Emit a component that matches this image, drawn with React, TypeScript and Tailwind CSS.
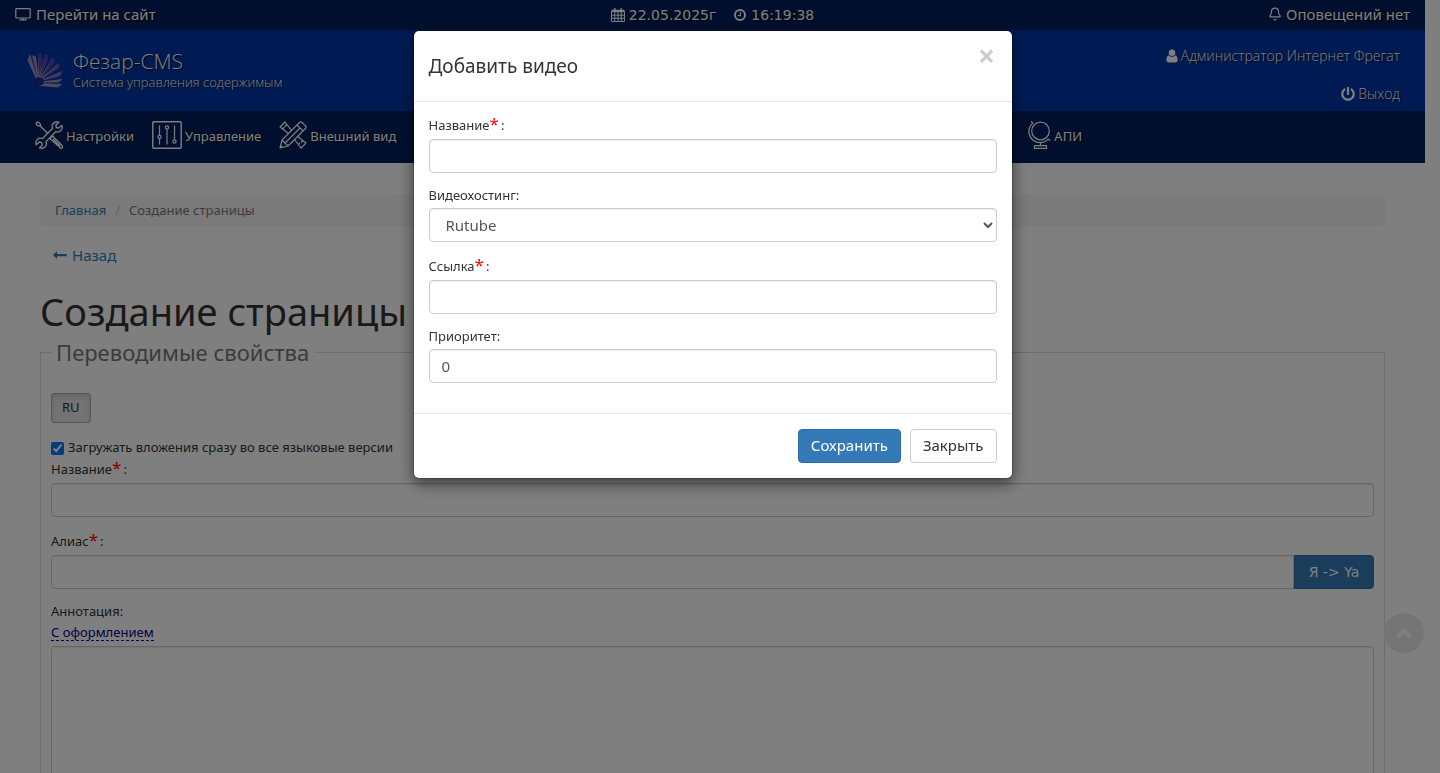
import { useState } from 'react';
import type { ReactNode } from 'react';
import { Bell } from 'lucide-react';
import { FaPowerOff } from 'react-icons/fa';

const inputClass =
  'block w-full h-[34px] px-3 text-[15px] text-[#555] bg-white border border-[#ccc] rounded shadow-[inset_0_1px_1px_rgba(0,0,0,0.075)] outline-none';

function MonitorIcon() {
  return (
    <svg className="w-4 h-3.5" viewBox="0 0 16 14" fill="none" stroke="currentColor" strokeWidth="1.2">
      <rect x="0.8" y="1.6" width="14.4" height="9.4" rx="0.8" />
      <path d="M8 11v1.6M4.5 12.9h7" />
    </svg>
  );
}

function CalendarIcon() {
  return (
    <svg className="w-3.5 h-3.5" viewBox="0 0 14 14" fill="none" stroke="currentColor">
      <path d="M0.5 3.5h13v10H0.5zM3.7 4v9.5M7 4v9.5M10.3 4v9.5M1 7.2h12M1 10.3h12" strokeWidth="1" />
      <path d="M0.5 3h13" strokeWidth="2.4" />
      <path d="M3.8 0.2v3M10.2 0.2v3" strokeWidth="1.8" />
    </svg>
  );
}

function ClockIcon() {
  return (
    <svg className="w-3 h-3" viewBox="0 0 12 12" fill="none" stroke="currentColor">
      <circle cx="6" cy="6" r="5" strokeWidth="1.9" />
      <path d="M6.4 3v3.6H3.8" strokeWidth="1.1" />
    </svg>
  );
}

function UserIcon() {
  return (
    <svg className="w-3 h-3.5" viewBox="0 0 12 14" fill="currentColor">
      <circle cx="6" cy="3.8" r="3.3" />
      <path d="M2.6 6.2C1 6.6 0.4 8.6 0.4 11c0 1.5 0.8 2.4 2 2.4h7.2c1.2 0 2-0.9 2-2.4 0-2.4-0.6-4.4-2.2-4.8C8.5 7.2 7.4 7.8 6 7.8S3.5 7.2 2.6 6.2z" />
    </svg>
  );
}

function LongArrowIcon() {
  return (
    <svg className="w-3.5 h-2.5" viewBox="0 0 14 10" fill="currentColor">
      <path d="M0 5l4-3.8v2.8h9.8v2.2H4v2.8z" />
    </svg>
  );
}

function FanLogo() {
  return (
    <svg className="w-9 h-9" viewBox="0 0 36 36">
      <g fill="#9a94c0">
        <path d="M9 27L0.5 8L3 2L10 25z" />
        <path d="M10 26L5 3L9 5L11.5 25z" />
        <path d="M11 25L11 2L15 6L12.5 25z" />
        <path d="M12 25L18 3L20.5 8L13 25.5z" />
        <path d="M12.5 26L25.5 6L27 11L13.5 26.5z" />
        <path d="M13 27L31.5 11L31.5 16L14 27.5z" />
        <path d="M14 28L35 19L33 24L14 29z" />
        <path d="M14 29.5L35.5 27L32 30.5L14 30.5z" />
        <path d="M10 31L35.5 32L31 35.5L14 34z" />
      </g>
      <g fill="#5b3fa8">
        <path d="M11 25L5 3L3 2L10 25z" opacity="0.5" />
        <path d="M12 25L11 2L13.5 0.5L15 6z" />
        <path d="M13 25L18 3L21 2.5L20.5 8z" />
        <path d="M14 26L25.5 6L28 6.5L27 11z" />
        <path d="M14 28L31.5 11L33.5 13L31.5 16z" opacity="0.7" />
        <path d="M14 29L35 19L36 22L33 24z" opacity="0.4" />
      </g>
      <path d="M7 31a5 5 0 0 1 10-1l-1.5 3h-7z" fill="#152a80" />
      <circle cx="12" cy="30.5" r="1.6" fill="#34348c" />
    </svg>
  );
}

function ToolsIcon() {
  return (
    <svg className="w-7 h-7" viewBox="0 0 28 28" fill="none" stroke="currentColor" strokeWidth="1.3" strokeLinejoin="round">
      <path d="M1 2.5L2.5 1L5 2.5L5.5 4.5L4 5.2L2 4.5zM5 4.8L12.5 12.3" />
      <path d="M15 17.5l2.5-2.5 9.5 9.5c0.8 0.8 0.8 1.6 0.2 2.2s-1.6 0.6-2.2-0.2zM18 18l7 7" />
      <path d="M24 1.2c-2-0.8-4.5-0.2-5.8 1.3-1.2 1.4-1.3 3.3-0.7 5L7.5 17.5c-1.7-0.6-3.6-0.4-5 0.8C1 19.7 0.5 22 1.2 23.8l3-2.8 2.5 0.6 0.6 2.5-2.8 2.9c2 0.7 4.3 0.2 5.7-1.2 1.3-1.4 1.5-3.4 0.8-5.2L20.7 10.7c1.7 0.6 3.6 0.4 5-0.9 1.4-1.4 1.9-3.7 1.1-5.6l-2.9 2.9-2.5-0.6-0.6-2.5z" />
    </svg>
  );
}

function SlidersIcon() {
  return (
    <svg className="w-[30px] h-7" viewBox="0 0 30 28" fill="none" stroke="currentColor" strokeWidth="1.2">
      <rect x="0.8" y="0.7" width="28.4" height="26.6" rx="1" strokeWidth="1.4" />
      <path d="M7.5 4.5v9.5M7.5 18v5.5M15 8.5v15M22.5 4.5v14" />
      <circle cx="7.5" cy="16" r="1.6" />
      <circle cx="15" cy="6.5" r="1.6" />
      <circle cx="22.5" cy="20.5" r="1.6" />
    </svg>
  );
}

function DesignIcon() {
  return (
    <svg className="w-7 h-7" viewBox="0 0 28 28" fill="none" stroke="currentColor" strokeWidth="1.2" strokeLinejoin="round">
      <path d="M9.5 12.5L1 6L6 1L12.5 9.5M18.5 15.5L27 22L22 27L15.5 18.5" />
      <path d="M3.5 8l2-2M8 3.5l-2 2M24 19.5l-2 2M19.5 23.5l1.5-1.5" />
      <path d="M1 27l2-8L20.5 1.5c0.8-0.8 1.8-0.8 2.6 0l3.4 3.4c0.8 0.8 0.8 1.8 0 2.6L9 25zM3 19l6 6M18 4l6 6M6 22L21 7M1.5 24.5l2 2" />
    </svg>
  );
}

function GlobeIcon() {
  return (
    <svg className="w-[23px] h-7" viewBox="0 0 23 28" fill="none" stroke="currentColor" strokeWidth="1.2">
      <circle cx="12.5" cy="10" r="8.8" />
      <path d="M3 0.5l1.8 1.6C1.5 5 0.3 9 1.2 13c1.3 5.5 5.8 8.7 10.8 8.7 3.2 0 6-1.2 8.2-3.5l2 1.3M12.5 21.7v3M6.5 24.7h12v2.7h-12z" />
    </svg>
  );
}

function NavItem({ icon, children }: { icon: ReactNode; children: ReactNode }) {
  return (
    <a href="#" className="flex items-center gap-[3px]">
      {icon}
      <span className="pt-[3px]">{children}</span>
    </a>
  );
}

interface FieldLabelProps {
  htmlFor: string;
  required?: boolean;
  children: ReactNode;
}

function FieldLabel({ htmlFor, required, children }: FieldLabelProps) {
  return (
    <label htmlFor={htmlFor} className={`block text-[13px] leading-[14px] ${required ? 'h-[23px] pt-px' : 'h-5'}`}>
      {children}
      {required && <span className="mr-0.5 text-[17px] leading-[14px] text-[red]">*</span>}:
    </label>
  );
}

function VideoModal({ onClose }: { onClose: () => void }) {
  return (
    <div className="fixed inset-0 pr-[15px] overflow-hidden">
      <div
        role="dialog"
        aria-labelledby="modal-title"
        className="w-full max-w-[600px] mt-[30px] mx-auto bg-white bg-clip-padding border border-black/20 rounded-md shadow-[0_5px_15px_rgba(0,0,0,0.5)]"
      >
        <div className="flex items-start justify-between h-[71px] px-[15px] pt-[15px] border-b border-[#e5e5e5]">
          <h4 id="modal-title" className="text-[19px] leading-10">Добавить видео</h4>
          <button onClick={onClose} aria-label="Закрыть" className="w-5 h-5 text-3xl leading-5 font-bold text-[#ccc]">
            ×
          </button>
        </div>

        <div className="px-[15px] pt-3.5 pb-[30px] space-y-[15px]">
          <div>
            <FieldLabel htmlFor="video-name" required>Название</FieldLabel>
            <input id="video-name" type="text" className={inputClass} />
          </div>
          <div>
            <FieldLabel htmlFor="video-host">Видеохостинг</FieldLabel>
            <select id="video-host" className={inputClass}>
              <option>Rutube</option>
            </select>
          </div>
          <div>
            <FieldLabel htmlFor="video-link" required>Ссылка</FieldLabel>
            <input id="video-link" type="text" className={inputClass} />
          </div>
          <div>
            <FieldLabel htmlFor="video-priority">Приоритет</FieldLabel>
            <input id="video-priority" type="text" defaultValue="0" className={inputClass} />
          </div>
        </div>

        <div className="flex justify-end gap-[9px] p-[15px] border-t border-[#e5e5e5] text-[15px]">
          <button className="h-[34px] px-3 pb-0.5 text-white bg-[#337ab7] border border-[#2e6da4] rounded">Сохранить</button>
          <button onClick={onClose} className="h-[34px] px-3 pb-0.5 bg-white border border-[#ccc] rounded">
            Закрыть
          </button>
        </div>
      </div>
    </div>
  );
}

export default function App() {
  const [modalOpen, setModalOpen] = useState(true);

  return (
    <div className="h-screen overflow-hidden bg-white pr-[15px] font-['Noto_Sans','DejaVu_Sans',sans-serif] text-[#333]">
      <header className="text-white [text-shadow:1px_1px_2px_#000]">
        <div className="grid grid-cols-3 items-center h-[30px] px-[15px] pb-0.5 bg-[#001f5c] text-[15px]">
          <a href="#" className="flex items-center gap-[5px]">
            <MonitorIcon />
            Перейти на сайт
          </a>
          <div className="flex items-center justify-center gap-[18px] pt-0.5 font-['DejaVu_Sans',sans-serif] text-sm">
            <span className="flex items-center gap-1">
              <CalendarIcon />
              22.05.2025г
            </span>
            <span className="flex items-center gap-[5px]">
              <ClockIcon />
              16:19:38
            </span>
          </div>
          <a href="#" className="flex items-center justify-end gap-1">
            <Bell className="w-3.5 h-3.5" strokeWidth={2} />
            Оповещений нет
          </a>
        </div>

        <div className="flex justify-between h-[81px] pl-[27px] pr-[25px] bg-[#0036a8] font-['Open_Sans',sans-serif] font-light">
          <a href="#" className="flex items-center gap-2.5 pb-0.5">
            <FanLogo />
            <span>
              <span className="block text-[21px] leading-6">Фезар-CMS</span>
              <span className="block text-[13px] leading-[18px]">Система управления содержимым</span>
            </span>
          </a>
          <div className="flex flex-col items-end justify-end gap-[18px] pb-[7px] text-sm leading-5">
            <a href="#" className="flex items-center gap-[3px]">
              <UserIcon />
              Администратор Интернет Фрегат
            </a>
            <a href="#" className="flex items-center gap-[3px]">
              <FaPowerOff className="w-3.5 h-3.5" />
              Выход
            </a>
          </div>
        </div>

        <nav className="flex items-center justify-between h-[52px] pb-1 pl-[35px] pr-[343px] bg-[#001f5c] text-[13px]">
          <div className="flex gap-[18px]">
            <NavItem icon={<ToolsIcon />}>Настройки</NavItem>
            <NavItem icon={<SlidersIcon />}>Управление</NavItem>
            <NavItem icon={<DesignIcon />}>Внешний вид</NavItem>
          </div>
          <NavItem icon={<GlobeIcon />}>АПИ</NavItem>
        </nav>
      </header>

      <main className="px-10 pt-8">
        <div className="flex items-center h-8 px-[15px] bg-[#f5f5f5] rounded text-[13px]">
          <a href="#" className="text-[#337ab7]">Главная</a>
          <span className="px-[9px] text-[#ccc]">/</span>
          <span className="text-[#777]">Создание страницы</span>
        </div>

        <a href="#" className="flex items-center gap-[5px] w-fit mt-[18px] ml-[13px] text-[15px] leading-5 text-[#337ab7]">
          <LongArrowIcon />
          Назад
        </a>

        <h1 className="mt-[25px] pb-[5px] text-[38px] leading-[42px]">Создание страницы</h1>

        <fieldset className="px-2.5 border border-[#ddd]">
          <legend className="px-[5px] text-[22px] leading-[30px] text-[#777]">Переводимые свойства</legend>

          <button className="block h-[30px] mt-[26px] px-2.5 text-[13px] bg-[#e6e6e6] border border-[#adadad] rounded-[3px] shadow-[inset_0_3px_5px_rgba(0,0,0,0.125)]">
            RU
          </button>

          <label className="flex items-center gap-1 h-5 mt-[15px] mb-0.5 text-[13px]">
            <input type="checkbox" defaultChecked className="w-[13px] h-[13px]" />
            Загружать вложения сразу во все языковые версии
          </label>

          <FieldLabel htmlFor="page-name" required>Название</FieldLabel>
          <input id="page-name" type="text" className={inputClass} />

          <div className="mt-[15px]">
            <FieldLabel htmlFor="page-alias" required>Алиас</FieldLabel>
            <div className="flex">
              <input id="page-alias" type="text" className={`${inputClass} rounded-r-none`} />
              <button className="shrink-0 min-w-20 h-[34px] px-3 font-['DejaVu_Sans',sans-serif] text-sm text-white bg-[#337ab7] border border-[#2e6da4] rounded-r">
                Я -&gt; Ya
              </button>
            </div>
          </div>

          <div className="mt-[15px]">
            <FieldLabel htmlFor="page-annotation">Аннотация</FieldLabel>
            <div className="flex items-start h-[22px]">
              <a href="#" className="text-[13px] leading-4 text-[#00008b] border-b border-dashed border-[#00008b]">
                С оформлением
              </a>
            </div>
            <textarea id="page-annotation" rows={10} className={`${inputClass} min-h-[220px] py-1.5 resize-none`} />
          </div>
        </fieldset>
      </main>

      <button
        aria-label="Наверх"
        className="fixed right-4 bottom-[120px] flex items-center justify-center w-10 h-10 rounded-full bg-[#ebebeb] text-white"
      >
        <svg className="w-4 h-4" viewBox="0 0 16 16" fill="none" stroke="currentColor" strokeWidth="4">
          <path d="M1.5 12L8 5.5L14.5 12" />
        </svg>
      </button>

      {modalOpen && (
        <>
          <div className="fixed inset-0 bg-black/50" />
          <VideoModal onClose={() => setModalOpen(false)} />
        </>
      )}
    </div>
  );
}
